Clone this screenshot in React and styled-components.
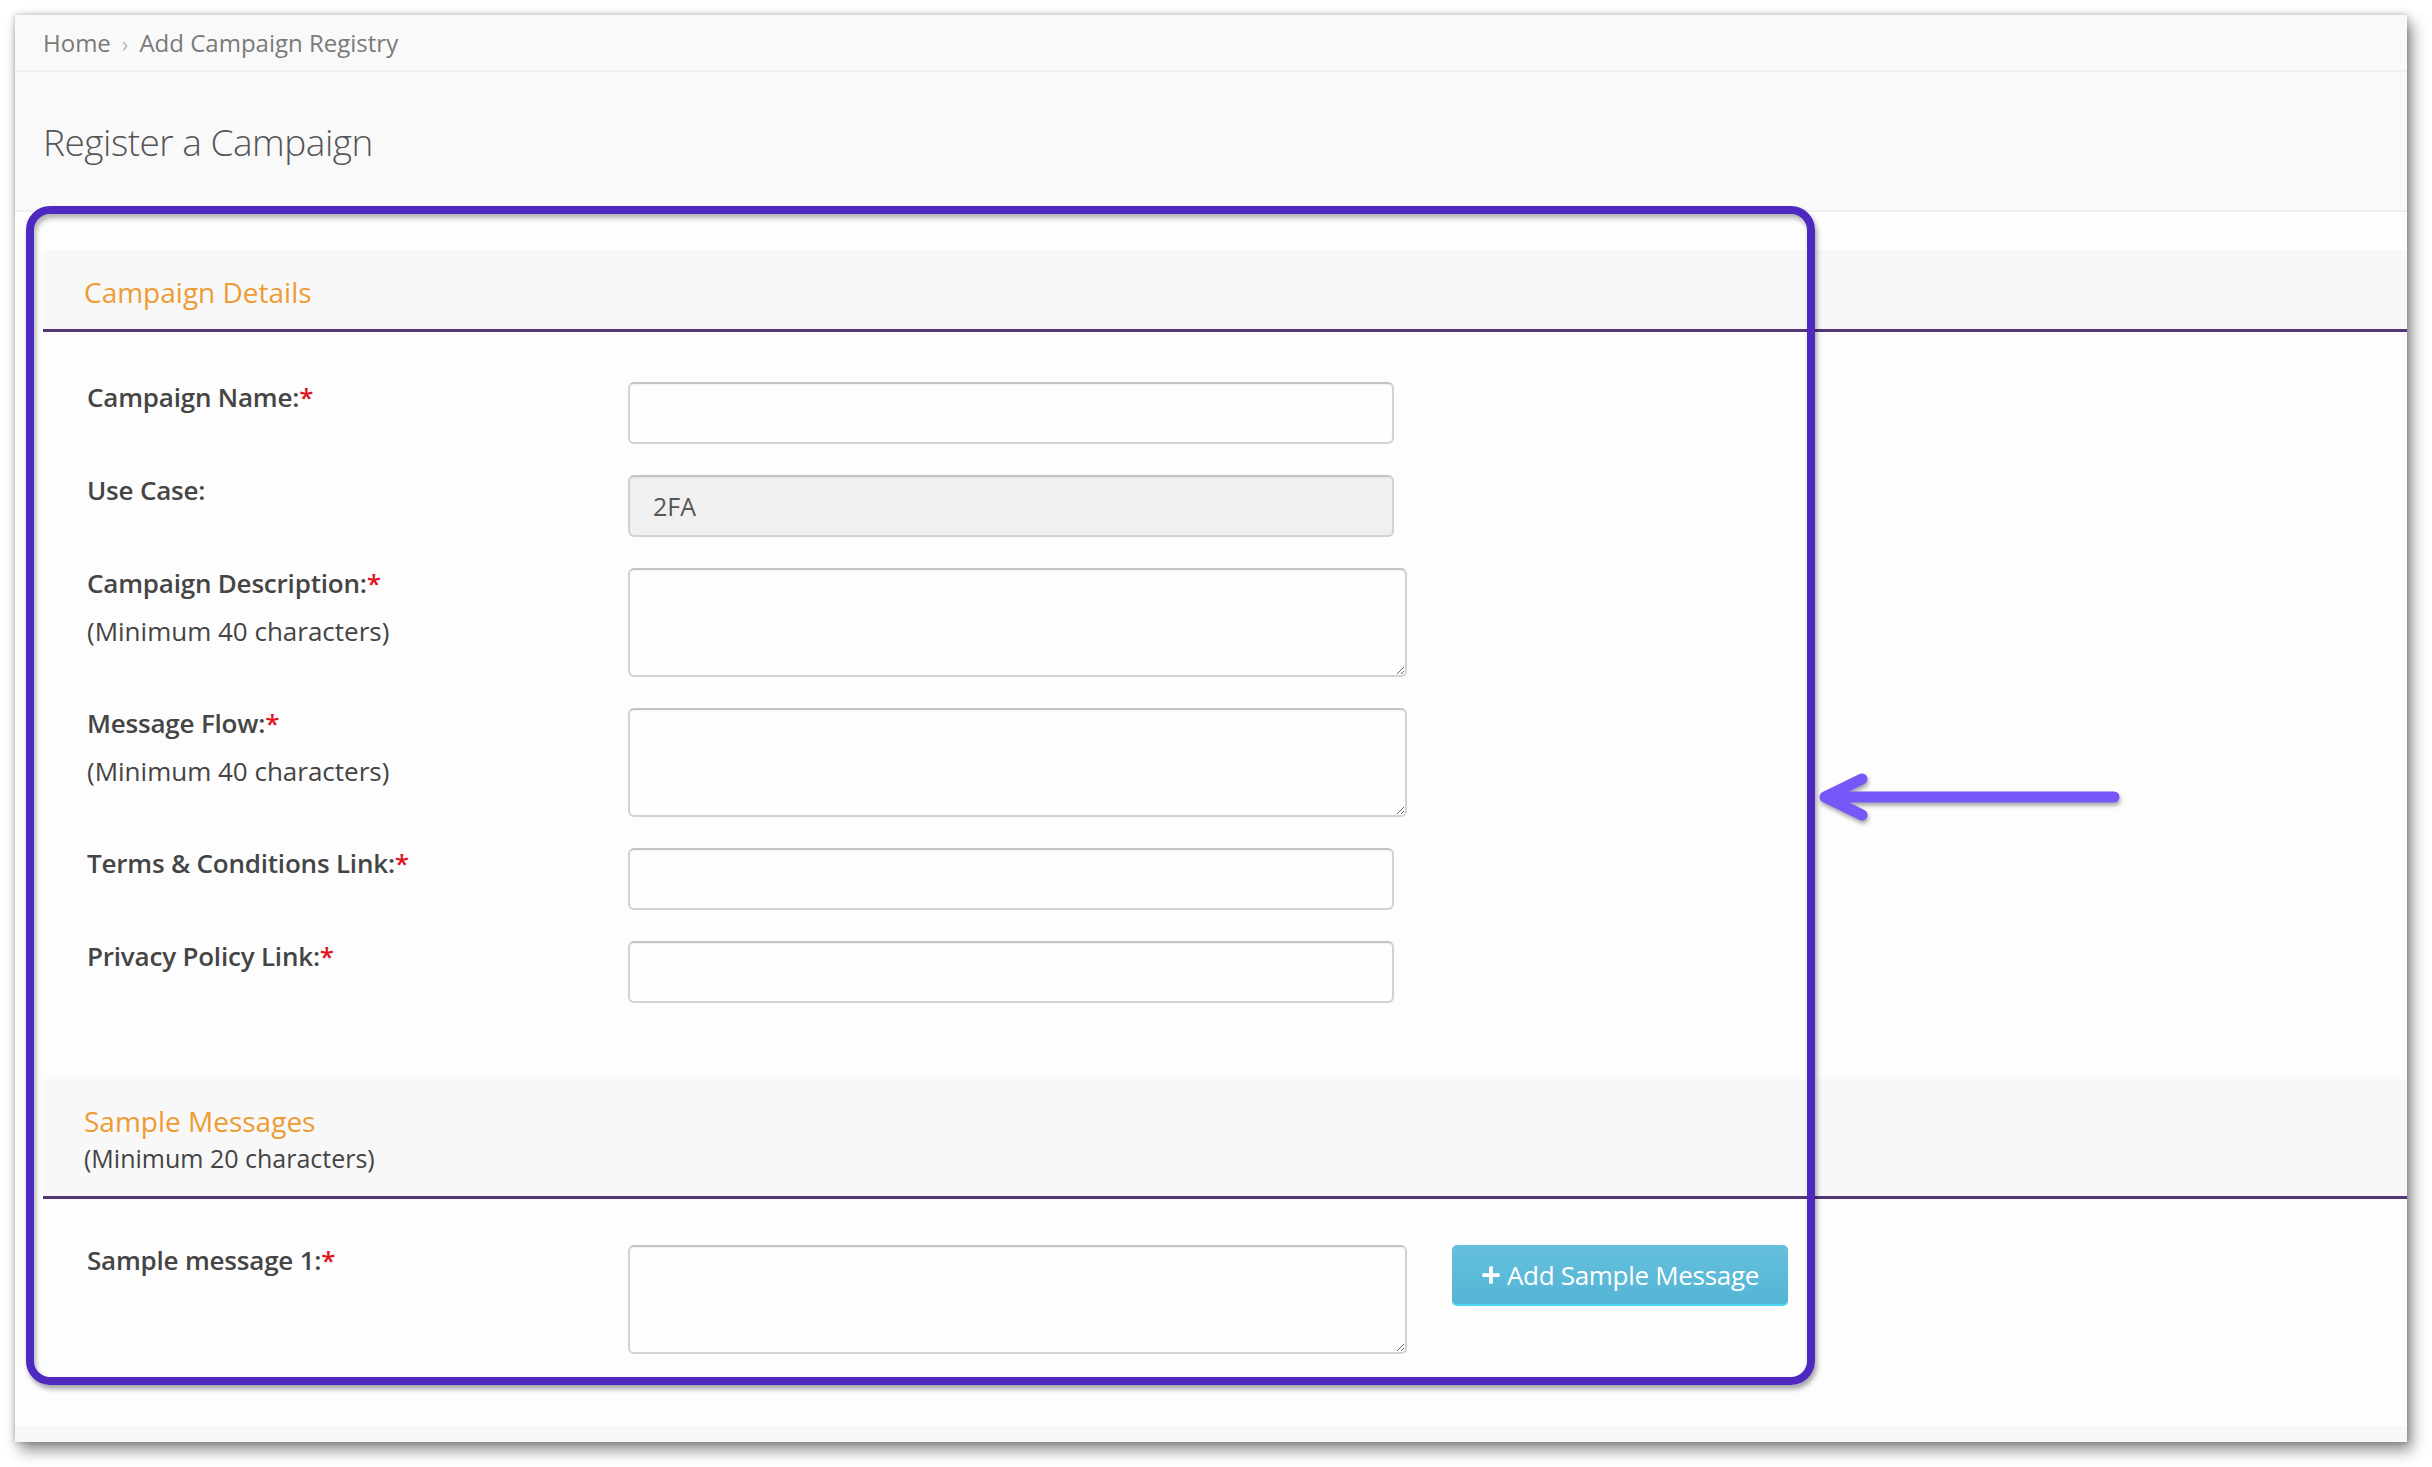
import React from "react";
import styled, { createGlobalStyle } from "styled-components";
import { FaPlus } from "react-icons/fa";

const GlobalStyle = createGlobalStyle`
  html, body {
    margin: 0;
    padding: 0;
    background: #ffffff;
    font-family: "Open Sans", "Liberation Sans", sans-serif;
  }
  * { box-sizing: border-box; }
`;

const fields = [
  { label: "Campaign Name:", required: true, kind: "input" },
  { label: "Use Case:", kind: "input", value: "2FA", disabled: true },
  { label: "Campaign Description:", required: true, hint: "(Minimum 40 characters)", kind: "textarea" },
  { label: "Message Flow:", required: true, hint: "(Minimum 40 characters)", kind: "textarea" },
  { label: "Terms & Conditions Link:", required: true, kind: "input" },
  { label: "Privacy Policy Link:", required: true, kind: "input" },
];

const App = () => {
  return (
    <Page>
      <GlobalStyle />
      <Window>
        <Breadcrumbs>
          <Crumb>Home</Crumb>
          <Sep>›</Sep>
          <Crumb>Add Campaign Registry</Crumb>
        </Breadcrumbs>
        <Header>
          <Title>Register a Campaign</Title>
        </Header>
        <Content>
          <Band $first>
            <BandTitle>Campaign Details</BandTitle>
          </Band>
          <Body>
            {fields.map((f) => (
              <Row key={f.label}>
                <LabelCol>
                  <Label>
                    {f.label}
                    {f.required && <Req>*</Req>}
                  </Label>
                  {f.hint && <Hint>{f.hint}</Hint>}
                </LabelCol>
                {f.kind === "textarea" ? (
                  <TextArea />
                ) : (
                  <Input defaultValue={f.value || ""} disabled={f.disabled} />
                )}
              </Row>
            ))}
          </Body>
          <Band>
            <BandTitle>Sample Messages</BandTitle>
            <BandHint>(Minimum 20 characters)</BandHint>
          </Band>
          <Body $last>
            <Row>
              <LabelCol>
                <Label>
                  Sample message 1:<Req>*</Req>
                </Label>
              </LabelCol>
              <TextArea />
              <AddButton>
                <FaPlus />
                Add Sample Message
              </AddButton>
            </Row>
          </Body>
        </Content>
        <Footer />
        <Highlight />
        <Arrow viewBox="0 0 320 80" width="320" height="80">
          <path
            d="M304 37 L16 37 M52 19 L15 37 L52 55"
            fill="none"
            stroke="#7857f8"
            strokeWidth="11"
            strokeLinecap="round"
            strokeLinejoin="round"
          />
        </Arrow>
      </Window>
    </Page>
  );
};

const Page = styled.div`
  width: 2432px;
  height: 1467px;
  padding: 15px 25px 25px 15px;
  background: #ffffff;
`;

const Window = styled.div`
  position: relative;
  width: 2392px;
  height: 1427px;
  background: #fdfdfd;
  display: flex;
  flex-direction: column;
  overflow: hidden;
  box-shadow: 0 0 6px rgba(0, 0, 0, 0.25), 5px 8px 14px rgba(0, 0, 0, 0.45);
`;

const Breadcrumbs = styled.div`
  height: 57px;
  display: flex;
  align-items: center;
  gap: 11px;
  padding-left: 28px;
  background: #f9f9f9;
  border-bottom: 2px solid #efefef;
  font-size: 24px;
`;

const Crumb = styled.span`
  color: #7a7a7a;
`;

const Sep = styled.span`
  color: #b8b8b8;
  font-size: 22px;
`;

const Header = styled.div`
  height: 140px;
  display: flex;
  align-items: center;
  padding-left: 28px;
  background: #f9f9f9;
  border-bottom: 2px solid #f0f0f0;
`;

const Title = styled.h1`
  margin: 0;
  font-weight: 300;
  font-size: 37px;
  color: #555555;
  letter-spacing: -0.5px;
`;

const Content = styled.div`
  flex: 1;
  padding-left: 28px;
  display: flex;
  flex-direction: column;
`;

const Band = styled.div`
  margin-top: ${(p) => (p.$first ? "38px" : "0")};
  padding: ${(p) => (p.$first ? "24px 41px 18px" : "24px 41px 20px")};
  background: #f8f8f8;
  border-bottom: 3px solid #553678;
`;

const BandTitle = styled.div`
  font-size: 28px;
  line-height: 37px;
  color: #ee9b33;
`;

const BandHint = styled.div`
  font-size: 25px;
  line-height: 36px;
  color: #444444;
`;

const Body = styled.div`
  display: flex;
  flex-direction: column;
  gap: 31px;
  padding: ${(p) => (p.$last ? "46px 0 0" : "50px 0 76px")};
`;

const Row = styled.div`
  display: flex;
  align-items: flex-start;
  padding-left: 44px;
`;

const LabelCol = styled.div`
  width: 541px;
  flex-shrink: 0;
`;

const Label = styled.div`
  font-size: 26px;
  line-height: 30px;
  font-weight: 600;
  color: #454545;
  letter-spacing: -0.2px;
`;

const Req = styled.span`
  color: #e0141e;
`;

const Hint = styled.div`
  margin-top: 15px;
  font-size: 26px;
  line-height: 36px;
  color: #444444;
`;

const fieldBase = `
  border: 2px solid #d2d2d2;
  border-top-color: #c4c4c4;
  border-radius: 6px;
  background: #fefefe;
  box-shadow: inset 0 1px 2px rgba(0, 0, 0, 0.06);
  font-family: "Open Sans", "Liberation Sans", sans-serif;
  font-size: 25px;
  color: #555555;
  outline: none;
`;

const Input = styled.input`
  ${fieldBase}
  width: 766px;
  height: 62px;
  padding: 0 23px;
  &:disabled {
    background: #f0f0f0;
    color: #555555;
  }
`;

const TextArea = styled.textarea`
  ${fieldBase}
  width: 779px;
  height: 109px;
  padding: 10px 23px;
  resize: vertical;
`;

const AddButton = styled.button`
  margin-left: 45px;
  width: 336px;
  height: 61px;
  display: flex;
  align-items: center;
  justify-content: center;
  gap: 6px;
  border: none;
  border-bottom: 2px solid #49d6ef;
  border-radius: 5px;
  background: linear-gradient(#64c0dc, #55b5d6);
  color: #ffffff;
  font-family: "Open Sans", "Liberation Sans", sans-serif;
  font-size: 26px;
  letter-spacing: -0.3px;
  svg {
    width: 20px;
    height: 20px;
  }
`;

const Footer = styled.div`
  height: 16px;
  background: #f8f8f8;
`;

const Highlight = styled.div`
  position: absolute;
  left: 11px;
  top: 191px;
  width: 1789px;
  height: 1179px;
  border: 8px solid #4f28c0;
  border-radius: 24px;
  box-shadow: 2px 4px 5px rgba(0, 0, 0, 0.35), inset 2px 4px 5px rgba(0, 0, 0, 0.3);
  pointer-events: none;
`;

const Arrow = styled.svg`
  position: absolute;
  left: 1795px;
  top: 745px;
  overflow: visible;
  filter: drop-shadow(1px 3px 2px rgba(0, 0, 0, 0.35));
`;

export default App;
